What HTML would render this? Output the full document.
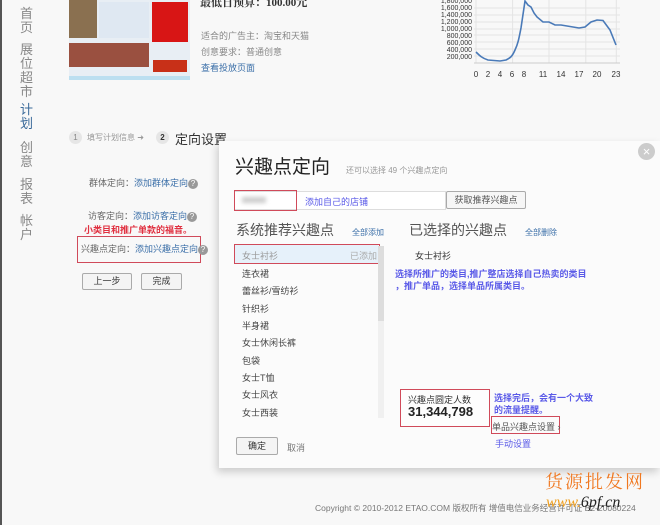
<!DOCTYPE html>
<html><head><meta charset="utf-8"><style>
*{margin:0;padding:0;box-sizing:border-box}
body{width:660px;height:525px;overflow:hidden;background:#f8f8f8;font-family:"Liberation Sans","Noto Sans CJK SC",sans-serif;position:relative;color:#333}
.a{position:absolute;white-space:nowrap}
.nav{position:absolute;left:20px;width:16px;font-size:13px;line-height:14px;color:#888}
.s{font-size:9px;color:#666}
.lnk{color:#3b6fa8}
.btn{position:absolute;border:1px solid #aaa;background:#f4f4f4;font-size:9px;text-align:center;border-radius:2px}
.red{position:absolute;border:1.5px solid #d04a5a}
.q{display:inline-block;width:10px;height:10px;border-radius:50%;background:#999;color:#fff;font-size:8px;line-height:10px;text-align:center;vertical-align:middle}
.li{position:absolute;left:242px;font-size:9px;color:#444}
.blue{color:#5a5ae8;font-size:9px;font-weight:bold}
</style></head><body>
<div class="a" style="left:0;top:0;width:2px;height:525px;background:#555"></div>
<div class="nav" style="top:7px">首页</div>
<div class="nav" style="top:43px">展位超市</div>
<div class="nav" style="top:103px;color:#3a6a9a">计划</div>
<div class="nav" style="top:141px">创意</div>
<div class="nav" style="top:178px">报表</div>
<div class="nav" style="top:214px">帐户</div>

<div class="a" style="left:69px;top:0;width:121px;height:80px;background:#e8eef4">
 <div class="a" style="left:0;top:0;width:28px;height:38px;background:#8a7050"></div>
 <div class="a" style="left:30px;top:2px;width:50px;height:36px;background:#dfe8f2"></div>
 <div class="a" style="left:83px;top:2px;width:36px;height:40px;background:#d81515"></div>
 <div class="a" style="left:0;top:43px;width:80px;height:24px;background:#9a5040"></div>
 <div class="a" style="left:84px;top:60px;width:34px;height:12px;background:#c83018"></div>
 <div class="a" style="left:0;top:76px;width:121px;height:4px;background:#bcdff0"></div>
</div>
<div class="a" style="left:200px;top:-6px;font-size:11px;font-weight:bold;font-family:'Liberation Serif','Noto Serif CJK SC',serif;color:#333">最低日预算：100.00元</div>
<div class="a s" style="left:201px;top:29px;color:#888">适合的广告主：淘宝和天猫</div>
<div class="a s" style="left:201px;top:45px;color:#888">创意要求：普通创意</div>
<div class="a s lnk" style="left:201px;top:61px">查看投放页面</div>

<svg class="a" style="left:420px;top:0" width="240" height="85">
<g stroke="#e4e4e4" stroke-width="1">
<line x1="54" y1="8" x2="200" y2="8"/><line x1="54" y1="15" x2="200" y2="15"/><line x1="54" y1="22" x2="200" y2="22"/><line x1="54" y1="29" x2="200" y2="29"/><line x1="54" y1="35" x2="200" y2="35"/><line x1="54" y1="42" x2="200" y2="42"/><line x1="54" y1="49" x2="200" y2="49"/><line x1="54" y1="56" x2="200" y2="56"/>
<line x1="56" y1="0" x2="56" y2="63"/><line x1="92.6" y1="0" x2="92.6" y2="63"/><line x1="129" y1="0" x2="129" y2="63"/><line x1="165.8" y1="0" x2="165.8" y2="63"/><line x1="196.3" y1="0" x2="196.3" y2="63"/>
</g>
<line x1="54" y1="63" x2="200" y2="63" stroke="#ccc"/>
<g font-size="7" fill="#333" text-anchor="end" font-family="Liberation Sans">
<text x="52" y="3">1,800,000</text><text x="52" y="10">1,600,000</text><text x="52" y="17">1,400,000</text><text x="52" y="24">1,200,000</text><text x="52" y="31">1,000,000</text><text x="52" y="38">800,000</text><text x="52" y="45">600,000</text><text x="52" y="52">400,000</text><text x="52" y="59">200,000</text>
</g>
<g font-size="8" fill="#333" text-anchor="middle" font-family="Liberation Sans">
<text x="56" y="77">0</text><text x="68" y="77">2</text><text x="80" y="77">4</text><text x="92" y="77">6</text><text x="104" y="77">8</text><text x="123" y="77">11</text><text x="141" y="77">14</text><text x="159" y="77">17</text><text x="177" y="77">20</text><text x="196" y="77">23</text>
</g>
<path d="M56,52 C60,56 62,58 68,60 L74,60.5 L80,61 L86,60 C90,58 92,57 95,50 C98,44 99,38 101,28 L105,1 L108,5 L111,7 L114,13 L117,17 L123,22 L129,22 L135,25 L141,25 L147,26 L153,27 L159,28 L165,27 L171,22 L177,20 L183,20.5 L190,30 L196,45" fill="none" stroke="#4a7ab8" stroke-width="1.6"/>
</svg>

<div class="a" style="left:69px;top:131px;width:13px;height:13px;border-radius:50%;background:#e6e6e6;font-size:8px;text-align:center;line-height:13px;color:#888">1</div>
<div class="a" style="left:87px;top:132px;font-size:8px;color:#999">填写计划信息 ➜</div>
<div class="a" style="left:156px;top:131px;width:13px;height:13px;border-radius:50%;background:#e6e6e6;font-size:8px;text-align:center;line-height:13px;font-weight:bold">2</div>
<div class="a" style="left:175px;top:129px;font-size:13px;color:#333">定向设置</div>

<div class="a s" style="left:89px;top:176px">群体定向：<span class="lnk">添加群体定向</span><span class="q">?</span></div>
<div class="a s" style="left:88px;top:209px">访客定向：<span class="lnk">添加访客定向</span><span class="q">?</span></div>
<div class="a" style="left:84px;top:223px;font-size:9px;color:#e03040;font-weight:bold">小类目和推广单款的福音。</div>
<div class="red" style="left:77px;top:236px;width:124px;height:27px"></div>
<div class="a s" style="left:81px;top:242px">兴趣点定向：<span class="lnk">添加兴趣点定向</span><span class="q">?</span></div>
<div class="btn" style="left:82px;top:273px;width:50px;height:17px;line-height:15px">上一步</div>
<div class="btn" style="left:141px;top:273px;width:41px;height:17px;line-height:15px">完成</div>

<div class="a" style="left:219px;top:141px;width:441px;height:327px;background:#fbfbfb;box-shadow:-2px 4px 8px rgba(0,0,0,.18)"></div>
<div class="a" style="left:638px;top:143px;width:17px;height:17px;border-radius:50%;background:#ccc;color:#fff;font-size:13px;line-height:17px;text-align:center">×</div>
<div class="a" style="left:235px;top:152px;font-size:19px;color:#222">兴趣点定向</div>
<div class="a" style="left:346px;top:165px;font-size:8px;color:#999">还可以选择 49 个兴趣点定向</div>

<div class="a" style="left:234px;top:191px;width:212px;height:19px;background:#fff;border:1px solid #ddd"></div>
<div class="a" style="left:242px;top:197px;width:24px;height:6px;background:#ccc;filter:blur(2px)"></div>
<div class="red" style="left:234px;top:190px;width:63px;height:21px"></div>
<div class="a blue" style="left:305px;top:195px;font-weight:normal">添加自己的店铺</div>
<div class="btn" style="left:446px;top:191px;width:80px;height:18px;line-height:16px;background:#f6f6f6;color:#555">获取推荐兴趣点</div>

<div class="a" style="left:236px;top:220px;font-size:14px;color:#555">系统推荐兴趣点</div>
<div class="a" style="left:352px;top:227px;font-size:8px;color:#3b6fa8">全部添加</div>
<div class="a" style="left:409px;top:220px;font-size:14px;color:#555">已选择的兴趣点</div>
<div class="a" style="left:525px;top:227px;font-size:8px;color:#3b6fa8">全部删除</div>

<div class="a" style="left:235px;top:245px;width:143px;height:18px;background:#e6f1fa"></div>
<div class="red" style="left:234px;top:244px;width:146px;height:20px"></div>
<div class="a" style="left:242px;top:249px;font-size:9px;color:#999">女士衬衫</div>
<div class="a" style="left:350px;top:249px;font-size:9px;color:#aaa">已添加</div>
<div class="a" style="left:378px;top:246px;width:6px;height:172px;background:#f0f0f0"></div>
<div class="a" style="left:378px;top:246px;width:6px;height:75px;background:#ddd"></div>
<div class="li" style="top:267px">连衣裙</div>
<div class="li" style="top:284px">蕾丝衫/雪纺衫</div>
<div class="li" style="top:302px">针织衫</div>
<div class="li" style="top:319px">半身裙</div>
<div class="li" style="top:336px">女士休闲长裤</div>
<div class="li" style="top:354px">包袋</div>
<div class="li" style="top:371px">女士T恤</div>
<div class="li" style="top:388px">女士风衣</div>
<div class="li" style="top:406px">女士西装</div>
<div class="btn" style="left:236px;top:437px;width:42px;height:18px;line-height:16px">确定</div>
<div class="a" style="left:287px;top:441px;font-size:9px;color:#777">取消</div>

<div class="a" style="left:415px;top:249px;font-size:9px;color:#333">女士衬衫</div>
<div class="a blue" style="left:395px;top:268px;line-height:12px">选择所推广的类目,推广整店选择自己热卖的类目<br>，推广单品，选择单品所属类目。</div>

<div class="red" style="left:400px;top:389px;width:90px;height:38px;background:#fdfdfd"></div>
<div class="a" style="left:408px;top:393px;font-size:9px;color:#333">兴趣点圆定人数</div>
<div class="a" style="left:408px;top:404px;font-size:13px;font-weight:bold;color:#222">31,344,798</div>
<div class="a blue" style="left:494px;top:392px;line-height:12px">选择完后，会有一个大致<br>的流量提醒。</div>
<div class="red" style="left:491px;top:416px;width:69px;height:18px"></div>
<div class="a" style="left:492px;top:420px;font-size:9px;color:#555">单品兴趣点设置 ›</div>
<div class="a blue" style="left:495px;top:437px;font-weight:normal">手动设置</div>

<div class="a" style="left:315px;top:502px;font-size:8.5px;color:#777">Copyright © 2010-2012 ETAO.COM 版权所有 增值电信业务经营许可证 B2-20080224</div>
<div class="a" style="left:545px;top:468px;font-size:18px;color:#f07820;font-family:'Noto Serif CJK SC',serif;letter-spacing:2px">货源批发网</div>
<div class="a" style="left:546px;top:494px;font-size:16px;color:#222;font-style:italic;font-family:'Liberation Serif',serif"><span style="color:#f0a020">www.</span>6pf.cn</div>
</body></html>
